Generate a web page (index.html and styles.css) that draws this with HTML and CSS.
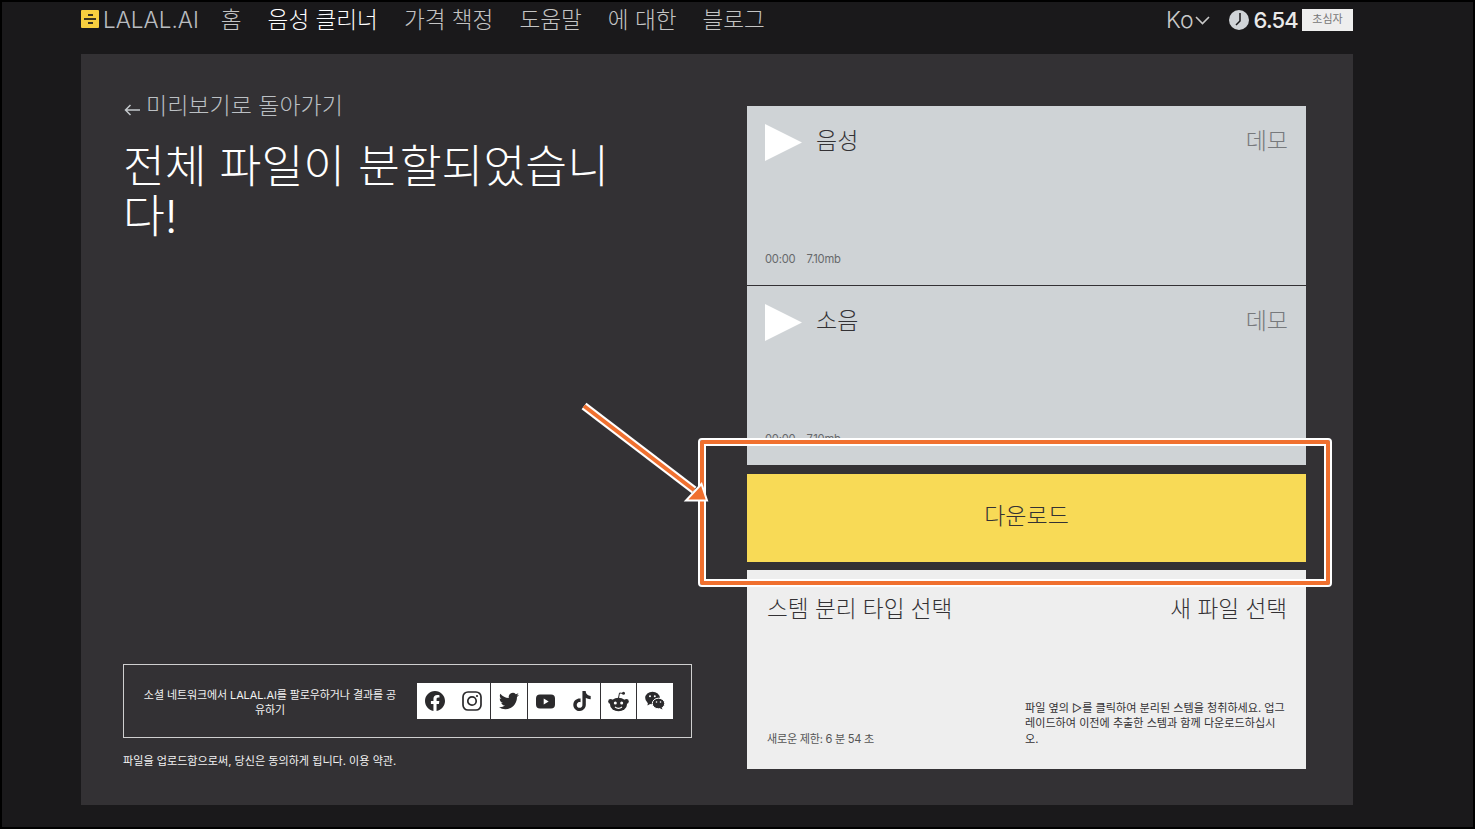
FILE: index.html
```html
<!DOCTYPE html>
<html lang="ko">

<head>
    <meta charset="UTF-8">
    <meta name="viewport" content="width=device-width, initial-scale=1.0">
    <title>LALAL.AI</title>
    <link rel="stylesheet" href="styles.css">
</head>

<body>
    <div class="frame">
        <header class="top">
            <a class="logo">
                <span class="logoMark"><i></i><b></b><i></i></span>
                <span>LALAL.AI</span>
            </a>
            <nav class="nav">
                <a>홈</a>
                <a class="active">음성 클리너</a>
                <a>가격 책정</a>
                <a>도움말</a>
                <a>에 대한</a>
                <a>블로그</a>
            </nav>
            <div class="account">
                <a class="lang">Ko
                    <svg width="15" height="9" viewBox="0 0 15 9"><path d="M1 1l6.5 6.5L14 1" fill="none" stroke="#c9c9c9" stroke-width="1.6"/></svg>
                </a>
                <svg class="clock" width="20" height="20" viewBox="0 0 20 20"><circle cx="10" cy="10" r="10" fill="#d0d4d8"/><path d="M11 3v8l-4 4" fill="none" stroke="#1a191b" stroke-width="1.5"/></svg>
                <span class="minutes">6.54</span>
                <span class="badge">초심자</span>
            </div>
        </header>

        <main class="card">
            <section class="left">
                <a class="back">
                    <svg width="16" height="12" viewBox="0 0 16 12"><path d="M6.500 1L1.500 6l5 5M1.500 6H16" fill="none" stroke="#c4c8cc" stroke-width="1.500"/></svg>
                    <span>미리보기로 돌아가기</span>
                </a>
                <h1 class="title">전체 파일이 분할되었습니다!</h1>
                <div class="social">
                    <p class="socialText">소셜 네트워크에서 LALAL.AI를 팔로우하거나 결과를 공유하기</p>
                    <div class="icons">
                        <a class="icon"><svg width="20" height="20" viewBox="0 0 24 24"><path d="M24 12.073c0-6.627-5.373-12-12-12s-12 5.373-12 12c0 5.990 4.388 10.954 10.125 11.854v-8.385H7.078v-3.470h3.047V9.430c0-3.007 1.792-4.669 4.533-4.669 1.312 0 2.686.235 2.686.235v2.953H15.830c-1.491 0-1.956.925-1.956 1.874v2.250h3.328l-.532 3.470h-2.796v8.385C19.612 23.027 24 18.062 24 12.073z"/></svg></a>
                        <a class="icon"><svg width="20" height="20" viewBox="0 0 20 20"><rect x="1" y="1" width="18" height="18" rx="5" fill="none" stroke="#2b2a2c" stroke-width="1.700"/><circle cx="10" cy="10" r="4.200" fill="none" stroke="#2b2a2c" stroke-width="1.700"/><circle cx="15" cy="5" r="1.100" fill="#2b2a2c"/></svg></a>
                        <a class="icon line"><svg width="20" height="20" viewBox="0 0 24 24"><path d="M23.953 4.570a10 10 0 01-2.825.775 4.958 4.958 0 002.163-2.723c-.951.555-2.005.959-3.127 1.184a4.920 4.920 0 00-8.384 4.482C7.690 8.095 4.067 6.130 1.640 3.162a4.822 4.822 0 00-.666 2.475c0 1.710.870 3.213 2.188 4.096a4.904 4.904 0 01-2.228-.616v.060a4.923 4.923 0 003.946 4.827 4.996 4.996 0 01-2.212.085 4.936 4.936 0 004.604 3.417 9.867 9.867 0 01-6.102 2.105c-.390 0-.779-.023-1.170-.067a13.995 13.995 0 007.557 2.209c9.053 0 13.998-7.496 13.998-13.985 0-.210 0-.420-.015-.630A9.935 9.935 0 0024 4.590z"/></svg></a>
                        <a class="icon line"><svg width="19" height="15" viewBox="0 0 19 15"><path fill-rule="evenodd" d="M4 .5h11a4 4 0 014 4v6a4 4 0 01-4 4H4a4 4 0 01-4-4v-6a4 4 0 014-4zM7.700 4.500v6l5-3z"/></svg></a>
                        <a class="icon"><svg width="20" height="20" viewBox="0 0 24 24"><path d="M12.525.020c1.310-.020 2.610-.010 3.910-.020.080 1.530.630 3.090 1.750 4.170 1.120 1.110 2.700 1.620 4.240 1.790v4.030c-1.440-.050-2.890-.350-4.200-.970-.570-.260-1.100-.590-1.620-.930-.010 2.920.010 5.840-.020 8.750-.080 1.400-.540 2.790-1.350 3.940-1.310 1.920-3.580 3.170-5.910 3.210-1.430.080-2.860-.310-4.080-1.030-2.020-1.190-3.440-3.370-3.650-5.710-.020-.500-.030-1-.010-1.490.180-1.900 1.120-3.720 2.580-4.960 1.660-1.440 3.980-2.130 6.150-1.720.020 1.480-.040 2.960-.040 4.440-.990-.320-2.150-.230-3.020.370-.630.410-1.110 1.040-1.360 1.750-.210.510-.150 1.070-.140 1.610.240 1.640 1.820 3.020 3.500 2.870 1.120-.010 2.190-.660 2.770-1.610.190-.330.400-.670.410-1.060.100-1.790.060-3.570.070-5.360.010-4.030-.010-8.050.020-12.070z"/></svg></a>
                        <a class="icon line"><svg width="21" height="21" viewBox="0 0 21 21"><circle cx="15.500" cy="2.200" r="1.500"/><path d="M10.500 7L11.500 2l4 .5" fill="none" stroke="#2b2a2c" stroke-width="1"/><circle cx="2.600" cy="10.500" r="2.400"/><circle cx="18.400" cy="10.500" r="2.400"/><ellipse cx="10.500" cy="13.500" rx="8.500" ry="6.800"/><circle cx="7.300" cy="12" r="1.500" fill="#fff"/><circle cx="13.700" cy="12" r="1.500" fill="#fff"/><path d="M7 16c2 1.500 5 1.500 7 0" fill="none" stroke="#fff" stroke-width="1.100"/></svg></a>
                        <a class="icon line"><svg width="20" height="20" viewBox="0 0 20 20"><ellipse cx="7.500" cy="7" rx="7.300" ry="6.300"/><path d="M3 11l-.5 3.500L6 12.500z"/><ellipse cx="13.500" cy="12.500" rx="6.200" ry="5.300" stroke="#fff" stroke-width="1"/><path d="M16.500 16l1 2.500-3-1.500z"/><circle cx="5" cy="5.300" r="1" fill="#fff"/><circle cx="9.800" cy="5.300" r="1" fill="#fff"/><circle cx="11.500" cy="11" r=".8" fill="#fff"/><circle cx="15.500" cy="11" r=".8" fill="#fff"/></svg></a>
                    </div>
                </div>
                <p class="terms">파일을 업로드함으로써, 당신은 동의하게 됩니다. 이용 약관.</p>
            </section>

            <section class="right">
                <div class="track">
                    <div class="trackTop">
                        <span class="play"></span>
                        <span class="trackName">음성</span>
                        <span class="demo">데모</span>
                    </div>
                    <div class="trackInfo"><span>00:00</span><span>7.10mb</span></div>
                </div>
                <div class="track">
                    <div class="trackTop">
                        <span class="play"></span>
                        <span class="trackName">소음</span>
                        <span class="demo">데모</span>
                    </div>
                    <div class="trackInfo"><span>00:00</span><span>7.10mb</span></div>
                </div>
                <a class="download">다운로드</a>
                <div class="panel">
                    <div class="panelTop">
                        <span>스템 분리 타입 선택</span>
                        <span>새 파일 선택</span>
                    </div>
                    <div class="panelBottom">
                        <span class="limit">새로운 제한: 6 분 54 초</span>
                        <p class="hint">파일 옆의 ▷를 클릭하여 분리된 스템을 청취하세요. 업그레이드하여 이전에 추출한 스템과 함께 다운로드하십시오.</p>
                    </div>
                </div>
            </section>
        </main>
    </div>

    <!-- annotation on top of the screenshot -->
    <div class="markBox"></div>
    <svg class="markArrow" width="140" height="105" viewBox="0 0 140 105">
        <path d="M4 4L114 88" stroke="#fff" stroke-width="8" fill="none"/>
        <path d="M4 4L114 88" stroke="#f0702f" stroke-width="4" fill="none"/>
        <path d="M127 98.500H106L121.500 82z" fill="#f0702f" stroke="#fff" stroke-width="2"/>
    </svg>
</body>

</html>
```

FILE: styles.css
```css
* {
    box-sizing: border-box;
}

html, body {
    width: 100%;
    height: 100%;
}

body {
    margin: 0;
    background-color: #1a191b;
    font-family: Inter, "Noto Sans CJK KR", sans-serif;
    overflow: hidden;
}

a {
    display: block;
}

p, h1 {
    margin: 0;
}

.frame {
    height: 829px;
    border: 2px solid #000;
    padding: 0 120px 22px 79px;
    display: flex;
    flex-direction: column;
}

/* top bar */
.top {
    height: 52px;
    padding-bottom: 18px;
    display: flex;
    align-items: center;
    color: #c4c4c4;
    font-size: 22.600px;
    font-weight: 300;
}

.logo {
    display: flex;
    align-items: center;
    gap: 4px;
    font-size: 22.500px;
    color: #b9bcc0;
}

.logoMark {
    width: 18px;
    height: 18px;
    border-radius: 1px;
    background-color: #f8cf3f;
    display: flex;
    flex-direction: column;
    align-items: center;
    justify-content: center;
    gap: 2px;
}

.logoMark i {
    width: 5px;
    height: 2px;
    background-color: #3a3320;
}

.logoMark b {
    width: 12px;
    height: 2px;
    background-color: #3a3320;
}

.nav {
    display: flex;
    gap: 26px;
    margin-left: 22px;
    padding-bottom: 2px;
}

.nav a {
    white-space: nowrap;
}

.nav .active {
    color: #fff;
}

.account {
    margin-left: auto;
    display: flex;
    align-items: center;
    padding-top: 2px;
}

.lang {
    display: flex;
    align-items: center;
    gap: 1px;
    font-size: 23px;
    color: #c9c9c9;
}

.clock {
    margin-left: 19px;
}

.minutes {
    margin-left: 5px;
    color: #e9e9e9;
    font-size: 22px;
    font-weight: 500;
    letter-spacing: -0.8px;
}

.badge {
    margin-left: 4px;
    width: 51px;
    height: 22px;
    background-color: #eee;
    color: #777;
    font-size: 11px;
    font-weight: 400;
    text-align: center;
    line-height: 20px;
}

/* main card */
.card {
    flex: 1;
    background-color: #333134;
    padding: 41px 47px 36px 42px;
    display: grid;
    grid-template-columns: 569px 559px;
    gap: 55px;
}

.left {
    display: flex;
    flex-direction: column;
}

.back {
    display: flex;
    align-items: center;
    gap: 6px;
    color: #bcc0c4;
    font-size: 23px;
    font-weight: 300;
    line-height: 1;
    padding-left: 1px;
}

.back svg {
    margin-top: 6px;
}

.title {
    margin-top: 24px;
    width: 500px;
    color: #fff;
    font-size: 45.500px;
    font-weight: 300;
    line-height: 50px;
}

.social {
    margin-top: auto;
    height: 74px;
    border: 1px solid #cfcfcf;
    padding-right: 18px;
    display: flex;
    align-items: center;
}

.socialText {
    flex: 1;
    padding: 3px 19px 0 18px;
    text-align: center;
    color: #f2f2f2;
    font-size: 11px;
    line-height: 15px;
    letter-spacing: -0.1px;
}

.icons {
    display: flex;
    background-color: #fff;
}

.icon {
    width: 36.600px;
    height: 36px;
    display: flex;
    align-items: center;
    justify-content: center;
    fill: #2b2a2c;
}

.icon.line {
    border-left: 1px solid #333134;
}

.terms {
    margin-top: 15px;
    color: #f2f2f2;
    font-size: 11.100px;
    line-height: 16px;
}

/* right column */
.right {
    display: flex;
    flex-direction: column;
    padding-top: 11px;
}

.track {
    height: 180px;
    background-color: #cfd3d6;
    border-bottom: 1px solid #333134;
    padding: 18px 18px 0;
    position: relative;
}

.track + .track {
    height: 179px;
    border-bottom: 0;
}

.trackTop {
    display: flex;
    color: #333134;
    font-size: 23px;
    font-weight: 300;
    line-height: 34px;
}

.play {
    width: 37px;
    height: 37px;
    background-color: #fff;
    clip-path: polygon(0 0, 100% 50%, 0 100%);
}

.trackName {
    margin-left: 14px;
}

.demo {
    margin-left: auto;
    color: #77797c;
}

.trackInfo {
    margin-top: 90px;
    display: flex;
    gap: 11px;
    color: #66686b;
    font-size: 11.200px;
    line-height: 16px;
    letter-spacing: -0.2px;
}

.download {
    margin-top: 9px;
    height: 88px;
    padding-bottom: 9px;
    background-color: #f8da56;
    color: #333134;
    font-size: 23px;
    font-weight: 300;
    display: flex;
    align-items: center;
    justify-content: center;
}

.panel {
    margin-top: 8px;
    flex: 1;
    background-color: #eee;
    padding: 23px 19px 22px 20px;
    display: flex;
    flex-direction: column;
    color: #333134;
}

.panelTop {
    display: flex;
    justify-content: space-between;
    font-size: 22.600px;
    font-weight: 300;
    line-height: 32px;
}

.panelBottom {
    margin-top: auto;
    display: flex;
    align-items: flex-end;
    justify-content: space-between;
    font-size: 11.100px;
    line-height: 15.500px;
}

.limit {
    color: #555;
    letter-spacing: -0.25px;
}

.hint {
    width: 262px;
}

/* annotation */
.markBox {
    position: absolute;
    left: 700px;
    top: 440px;
    width: 630px;
    height: 145px;
    border: 4px solid #f0702f;
    border-radius: 2px;
    outline: 2px solid #fff;
    box-shadow: inset 0 0 0 2px #fff;
}

.markArrow {
    position: absolute;
    left: 580px;
    top: 402px;
}
```
